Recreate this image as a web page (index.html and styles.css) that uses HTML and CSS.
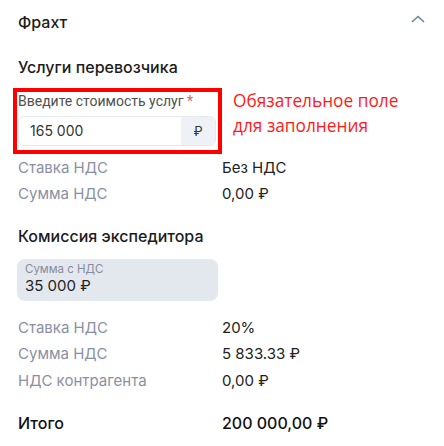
FILE: index.html
```html
<!DOCTYPE html>
<html lang="ru">
<head>
    <meta charset="UTF-8">
    <title>Фрахт</title>
    <link rel="stylesheet" href="styles.css">
</head>
<body>
    <div class="panel">
        <div class="panel-head">
            <span class="panel-title">Фрахт</span>
            <svg class="chevron" width="14" height="8" viewBox="0 0 14 8">
                <path d="M1 7 L7 1.5 L13 7" fill="none" stroke="#6f8593" stroke-width="1.6"/>
            </svg>
        </div>

        <h2 class="section-title">Услуги перевозчика</h2>

        <div class="required-row">
            <div class="field marked">
                <label class="field-label">Введите стоимость услуг <span class="star">*</span></label>
                <div class="input-box">
                    <span class="input-value">165 000</span>
                    <span class="input-addon">₽</span>
                </div>
            </div>
            <div class="note">Обязательное поле<br>для заполнения</div>
        </div>

        <div class="rows">
            <div class="row"><span class="row-label">Ставка НДС</span><span class="row-value">Без НДС</span></div>
            <div class="row"><span class="row-label">Сумма НДС</span><span class="row-value">0,00 ₽</span></div>
        </div>

        <h2 class="section-title second">Комиссия экспедитора</h2>

        <div class="readonly">
            <div class="readonly-label">Сумма с НДС</div>
            <div class="readonly-value">35 000 ₽</div>
        </div>

        <div class="rows lower">
            <div class="row"><span class="row-label">Ставка НДС</span><span class="row-value">20%</span></div>
            <div class="row"><span class="row-label">Сумма НДС</span><span class="row-value">5 833.33 ₽</span></div>
            <div class="row"><span class="row-label">НДС контрагента</span><span class="row-value">0,00 ₽</span></div>
        </div>

        <div class="row total">
            <span class="row-label">Итого</span>
            <span class="row-value">200 000,00 ₽</span>
        </div>
    </div>
</body>
</html>
```

FILE: styles.css
```css
body {
    margin: 0;
    background: #ffffff;
    font-family: Inter, Roboto, sans-serif;
    color: #1f1f1f;
}

.panel {
    padding: 0 18px;
}

/* header with collapse arrow */
.panel-head {
    display: flex;
    justify-content: space-between;
    align-items: center;
    height: 44px;
}

.panel-title {
    font-size: 16px;
    font-weight: 500;
    color: #1c1c1c;
}

.chevron {
    margin-right: 1px;
    margin-top: -6px;
}

.section-title {
    margin: 0;
    font-size: 16px;
    font-weight: 500;
    line-height: 20px;
    margin-top: 13px;
    color: #1c1c1c;
}

.section-title.second {
    margin-top: 20px;
}

/* field with red annotation */
.required-row {
    display: flex;
    align-items: flex-start;
    margin-top: 11px;
    margin-left: -5px;
}

.field.marked {
    width: 198px;
    border: 4px solid #ff0000;
    padding: 1px 2px 4px 1px;
}

.field-label {
    display: block;
    font-family: Roboto, sans-serif;
    font-size: 14px;
    color: #4f4f4f;
    line-height: 17px;
}

.star {
    color: #f05a5a;
}

.input-box {
    display: flex;
    height: 28px;
    margin-top: 6px;
    border: 1px solid #e6e9ee;
    border-radius: 6px;
    overflow: hidden;
}

.input-value {
    flex: 1;
    padding-left: 11px;
    font-size: 14px;
    line-height: 28px;
    color: #333;
}

.input-addon {
    width: 34px;
    background: #eef1f5;
    text-align: center;
    font-size: 13px;
    line-height: 28px;
    color: #333;
}

.note {
    margin-left: 11px;
    margin-top: 0;
    font-family: "Open Sans", sans-serif;
    font-size: 17.3px;
    line-height: 25px;
    color: #ff1a1a;
}

.rows.lower {
    margin-top: 13px;
}

.row {
    display: flex;
    height: 26px;
    align-items: center;
    font-size: 15px;
}

.row-label {
    width: 204px;
    color: #8a90a2;
}

.row-value {
    color: #222;
}

.lower .row:last-child {
    height: 29px;
}

.row.total {
    margin-top: 15px;
    font-size: 16px;
}

.row.total .row-label,
.row.total .row-value {
    color: #111;
    font-weight: 500;
}

/* read-only amount chip */
.readonly {
    width: 186px;
    margin-top: 13px;
    margin-left: -1px;
    padding: 4px 7px 5px 8px;
    background: #e3e8ef;
    border-radius: 8px;
}

.readonly-label {
    font-size: 11.5px;
    color: #868b98;
    line-height: 12px;
}

.readonly-value {
    margin-top: 1px;
    font-size: 15px;
    line-height: 20px;
    color: #1f1f1f;
}
```
